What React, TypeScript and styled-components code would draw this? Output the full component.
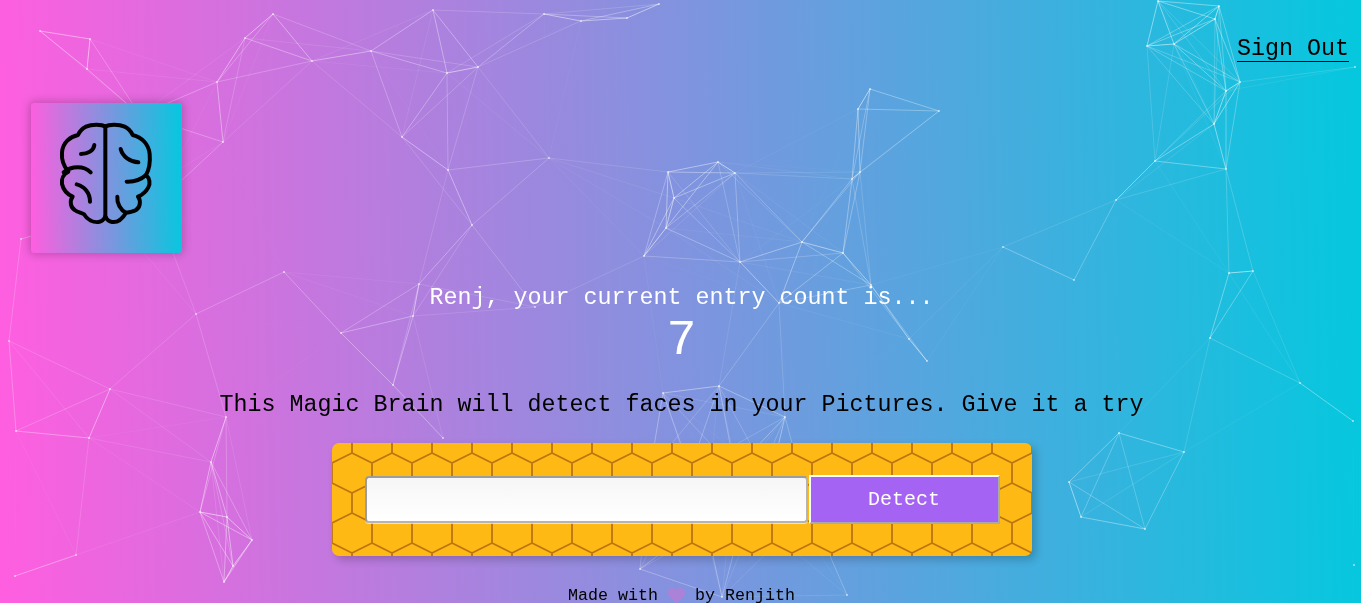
import styled, { createGlobalStyle } from "styled-components";

// particle positions read off the reference; edges are worked out like particles.js does
const nodes: [number, number][] = [
  [40, 31], [90, 39], [87, 69], [245, 38], [273, 14], [312, 61], [371, 51], [217, 82], [223, 142],
  [140, 115], [110, 213], [155, 205], [21, 239], [402, 137], [447, 73], [478, 67], [433, 10], [448, 170],
  [549, 158], [544, 14], [581, 21], [627, 18], [659, 4], [472, 225], [419, 284], [413, 316], [341, 333],
  [393, 385], [443, 438], [284, 272], [196, 314], [535, 307], [668, 172], [718, 162], [735, 173], [674, 198],
  [666, 228], [644, 256], [740, 262], [802, 242], [843, 253], [852, 179], [860, 172], [779, 303], [909, 339],
  [927, 361], [871, 285], [870, 89], [858, 109], [939, 111], [9, 341], [110, 389], [16, 431], [89, 438],
  [226, 417], [211, 462], [200, 512], [227, 517], [252, 540], [233, 566], [224, 582], [76, 555], [15, 576],
  [1003, 247], [1074, 280], [1229, 273], [1253, 271], [1210, 338], [1300, 383], [1353, 421], [1119, 433],
  [1184, 452], [1069, 482], [1081, 517], [1145, 529], [1354, 565], [1158, 1], [1219, 6], [1215, 19], [1147, 46],
  [1174, 44], [1240, 82], [1226, 91], [1214, 124], [1155, 161], [1226, 169], [1116, 200], [1355, 67],
  [663, 393], [719, 386], [785, 417], [640, 569], [722, 597], [847, 595], [705, 520], [745, 510], [770, 480],
  [735, 470], [690, 470], [650, 470], [810, 510],
];

const LINK_DISTANCE = 150;

const links = nodes.flatMap((a, i) =>
  nodes.slice(i + 1).flatMap((b) => {
    const d = Math.hypot(a[0] - b[0], a[1] - b[1]);
    return d < LINK_DISTANCE ? [{ a, b, alpha: 0.65 * (1 - d / LINK_DISTANCE) }] : [];
  })
);

const honeycomb =
  "data:image/svg+xml," +
  encodeURIComponent(
    `<svg xmlns="http://www.w3.org/2000/svg" width="40" height="60"><path d="M20 0V10L0 20V40L20 50V60M20 10L40 20V40L20 50" fill="none" stroke="#bb7410" stroke-width="1.8"/></svg>`
  );

const GlobalStyle = createGlobalStyle`
  html, body {
    margin: 0;
    padding: 0;
    height: 100%;
    overflow: hidden;
  }
  body {
    font-family: "Liberation Mono", "Courier New", monospace;
    background: linear-gradient(89deg, #ff5edf 0%, #04c8de 100%);
    color: #000;
  }
`;

const Particles = styled.svg`
  position: fixed;
  inset: 0;
  width: 1361px;
  height: 603px;
`;

const Page = styled.div`
  position: relative;
  height: 603px;
  overflow: hidden;
`;

const Nav = styled.nav`
  display: flex;
  justify-content: flex-end;
  height: 71px;
  padding: 36px 12px 0 0;
  box-sizing: border-box;
`;

const SignOut = styled.a`
  font-size: 23.33px;
  line-height: 27px;
  height: 27px;
  color: #000;
  cursor: pointer;
  text-decoration: underline;
  text-decoration-thickness: 1px;
  text-underline-offset: 6px;
`;

const LogoCard = styled.div`
  display: flex;
  align-items: center;
  justify-content: center;
  width: 151px;
  height: 150px;
  margin: 32px 0 0 31px;
  padding: 0 1px 10px 0;
  box-sizing: border-box;
  border-radius: 4px;
  background: linear-gradient(89deg, #ff5edf 0%, #04c8de 100%);
  box-shadow: 0 0 8px 2px rgba(0, 0, 0, 0.2);
`;

const Main = styled.main`
  display: flex;
  flex-direction: column;
  align-items: center;
  padding-left: 2px;
`;

const Greeting = styled.div`
  margin-top: 32px;
  font-size: 23.33px;
  line-height: 27px;
  color: #fff;
`;

const Count = styled.div`
  margin-top: 4px;
  font-size: 50px;
  line-height: 50px;
  color: #fff;
`;

const Tagline = styled.p`
  margin: 26px 0 24px;
  font-size: 23.33px;
  line-height: 27px;
`;

const Panel = styled.div`
  display: flex;
  align-items: center;
  width: 700px;
  padding: 32px;
  box-sizing: border-box;
  border-radius: 7px;
  background-color: #ffb914;
  background-image: url("${honeycomb}");
  box-shadow: 4px 4px 8px 0 rgba(0, 0, 0, 0.2);
`;

const UrlInput = styled.input`
  width: 443px;
  height: 47px;
  margin: 1px;
  padding: 8px;
  box-sizing: border-box;
  border: 2px solid #b4b4b4;
  border-top-color: #9c9c9c;
  border-left-color: #9c9c9c;
  border-radius: 4px;
  background: linear-gradient(#f6f6f6, #fff);
  box-shadow: 0 1px 0 rgba(255, 255, 255, 0.6);
  font: inherit;
`;

const DetectButton = styled.button`
  width: 191px;
  height: 49px;
  box-sizing: border-box;
  border: 2px solid;
  border-color: #fff #aaa #aaa #fff;
  background: #a463f2;
  color: #fff;
  font-family: inherit;
  font-size: 20px;
  cursor: pointer;
`;

const Footer = styled.footer`
  display: flex;
  align-items: center;
  justify-content: center;
  margin-top: 32px;
  font-size: 16.67px;
  line-height: 15px;
  white-space: pre;
`;

const Heart = styled.svg`
  width: 17px;
  height: 15px;
  opacity: 0.8;
`;

const Brain = () => (
  <svg width="98" height="106" viewBox="171 360 294 318" fill="none" stroke="#000" strokeWidth="12" strokeLinecap="round" strokeLinejoin="round">
    <path d="M316 380V650" />
    <path d="M316 380C305 372 275 372 258 380C245 386 238 396 234 405C210 410 188 428 186 458C184 482 192 500 205 515C190 522 184 538 186 552C190 570 200 582 218 590C208 604 212 622 224 630C232 636 242 638 252 643C262 660 280 668 296 666C305 665 312 658 316 650" />
    <path d="M316 380C327 372 357 372 374 380C387 386 394 396 398 405C425 412 446 432 449 462C451 485 448 508 438 525C450 535 451 552 445 562C438 575 428 584 414 590C424 604 420 622 408 630C398 636 388 637 378 638C368 655 352 668 336 666C327 665 320 658 316 650" />
    <path d="M283 435C281 452 263 462 243 462" />
    <path d="M191 517C215 497 252 497 272 517" />
    <path d="M230 553C252 558 270 578 270 605" />
    <path d="M362 447C368 470 390 486 415 487" />
    <path d="M380 545C405 546 425 537 438 525" />
    <path d="M352 590C350 610 362 630 378 638" />
  </svg>
);

const App = () => (
  <>
    <GlobalStyle />
    <Particles viewBox="0 0 1361 603">
      {links.map(({ a, b, alpha }, i) => (
        <line key={i} x1={a[0]} y1={a[1]} x2={b[0]} y2={b[1]} stroke="#fff" strokeOpacity={alpha} />
      ))}
      {nodes.map(([x, y], i) => (
        <circle key={i} cx={x} cy={y} r="1" fill="#fff" fillOpacity="0.6" />
      ))}
    </Particles>
    <Page>
      <Nav>
        <SignOut>Sign Out</SignOut>
      </Nav>
      <LogoCard>
        <Brain />
      </LogoCard>
      <Main>
        <Greeting>Renj, your current entry count is...</Greeting>
        <Count>7</Count>
        <Tagline>This Magic Brain will detect faces in your Pictures. Give it a try</Tagline>
        <Panel>
          <UrlInput type="text" />
          <DetectButton>Detect</DetectButton>
        </Panel>
        <Footer>
          {"Made with "}
          <Heart viewBox="0 0 17 15">
            <path d="M8.5 15C3 10.5 0 8 0 4.5C0 2 2 0 4.5 0C6.2 0 7.7 .9 8.5 2.3C9.3 .9 10.8 0 12.5 0C15 0 17 2 17 4.5C17 8 14 10.5 8.5 15Z" fill="#b57fd6" />
          </Heart>
          {" by Renjith"}
        </Footer>
      </Main>
    </Page>
  </>
);

export default App;
